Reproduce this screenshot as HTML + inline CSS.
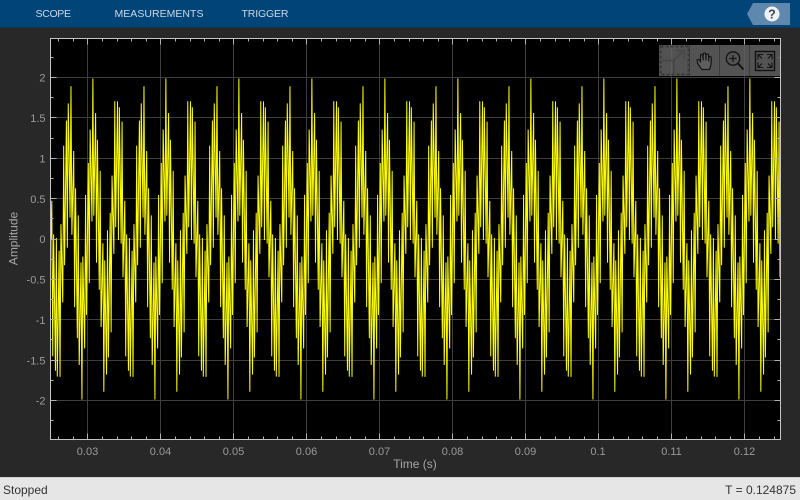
<!DOCTYPE html>
<html><head><meta charset="utf-8"><style>
html,body{margin:0;padding:0;width:800px;height:500px;overflow:hidden;background:#282828}
svg{position:absolute;left:0;top:0;display:block}
text{font-family:"Liberation Sans",sans-serif}
</style></head><body>
<svg width="800" height="500" viewBox="0 0 800 500" xmlns="http://www.w3.org/2000/svg">
<rect width="800" height="500" fill="#282828"/>
<rect width="800" height="27.5" fill="#004478"/>
<g font-size="10.5" fill="#c8d8e6" style="font-family:'DejaVu Sans',sans-serif">
<text x="35.5" y="17" textLength="35.5" lengthAdjust="spacing">SCOPE</text>
<text x="114.5" y="17" textLength="89" lengthAdjust="spacing">MEASUREMENTS</text>
<text x="241.5" y="17" textLength="47" lengthAdjust="spacing">TRIGGER</text>
</g>
<polygon points="747,14 753,3 790,3 790,25 753,25" fill="#5f88ae"/>
<circle cx="772" cy="14" r="7.5" fill="#f2f2f2"/>
<text x="772" y="18.5" text-anchor="middle" font-size="12.5" font-weight="bold" fill="#33475b">?</text>

<rect x="50.5" y="38.5" width="730" height="401" fill="#000"/>
<g id="grid" stroke="#3e3e3e" stroke-width="1" fill="none"></g>
<polyline id="sig" fill="none" stroke="#ffff00" stroke-width="1" points=""/>
<g id="ticks" stroke="#b0b0b0" stroke-width="1" fill="none"></g>
<rect x="50.5" y="38.5" width="730" height="401" fill="none" stroke="#c4c4c4" stroke-width="1"/>
<g id="ylab" font-size="11" fill="#9a9a9a" text-anchor="end">
<text x="45.5" y="81.5">2</text><text x="45.5" y="122">1.5</text><text x="45.5" y="162.5">1</text><text x="45.5" y="203">0.5</text><text x="45.5" y="243">0</text><text x="45.5" y="283.5">-0.5</text><text x="45.5" y="324">-1</text><text x="45.5" y="364.5">-1.5</text><text x="45.5" y="404.5">-2</text>
</g>
<g id="xlab" font-size="11" fill="#9a9a9a" text-anchor="middle">
<text x="87.5" y="455">0.03</text><text x="160.5" y="455">0.04</text><text x="233.5" y="455">0.05</text><text x="306.5" y="455">0.06</text><text x="379.5" y="455">0.07</text><text x="452.5" y="455">0.08</text><text x="525.5" y="455">0.09</text><text x="598" y="455">0.1</text><text x="671.5" y="455">0.11</text><text x="744.5" y="455">0.12</text>
</g>
<text x="415" y="468" text-anchor="middle" font-size="12" fill="#a6a6a6">Time (s)</text>
<text transform="translate(17.5 238.5) rotate(-90)" text-anchor="middle" font-size="12" fill="#a6a6a6">Amplitude</text>

<rect x="659" y="45" width="121" height="31" fill="#626262" fill-opacity="0.85"/>
<path d="M689.5 45V76M719.5 45V76M749.5 45V76" stroke="#3c3c3c" stroke-width="1"/>
<rect x="660.5" y="46.5" width="28" height="28" fill="none" stroke="#383838" stroke-width="2" stroke-dasharray="3 2"/>
<path d="M661.5 60.5H674V74M672 62L684 50.5M676 50.5H684.5V59" fill="none" stroke="#484848" stroke-width="2"/>
<path d="M702 69.5C699 66 697 63 697 60.5C697 59 699 59 700 61L700.5 62V55.5C700.5 54 702.5 54 702.8 55.5L703.2 60V54C703.2 52.8 705.5 52.8 705.7 54L706 60V55C706.3 53.6 708.3 53.6 708.5 55L708.8 61V57.5C709 56.2 711 56.2 711.2 57.5C711.5 62 711 66 709.5 69.5Z" fill="#5f5f5f" stroke="#141414" stroke-width="1.2" stroke-linejoin="round"/>
<circle cx="733" cy="58.5" r="6.7" fill="none" stroke="#141414" stroke-width="1.3"/>
<path d="M729.5 58.5H736.5M733 55V62" stroke="#141414" stroke-width="1.2" fill="none"/>
<path d="M737.8 63.2L743.5 69.5" stroke="#141414" stroke-width="2" fill="none"/>
<rect x="755.5" y="51.5" width="19" height="19" fill="none" stroke="#111" stroke-width="1.4"/>
<path d="M763 54.5H758V59.5M758 54.5L762 58.5M767 54.5H772V59.5M772 54.5L768 58.5M758 62.5V67.5H763M758 67.5L762 63.5M772 62.5V67.5H767M772 67.5L768 63.5" fill="none" stroke="#111" stroke-width="1.1"/>

<rect x="0" y="477" width="800" height="23" fill="#e6e6e6"/>
<rect x="0" y="477" width="800" height="1" fill="#d2d2d2"/>
<text x="3" y="494" font-size="12" fill="#333">Stopped</text>
<text x="796" y="494" font-size="12" fill="#333" text-anchor="end">T = 0.124875</text>
</svg>
<script>
(function(){
var X=function(t){return 87.4+(t-0.03)*7300},Y=function(v){return 239-v*80.75};
var L=50.5,R=780.5,T=38.5,B=439.5,g='',k='',i;
for(i=3;i<=12;i++){var x=Math.round(X(i/100))+0.5;g+='M'+x+' '+T+'V'+B;k+='M'+x+' '+T+'v6M'+x+' '+B+'v-6';}
for(i=-4;i<=4;i++){var y=Math.round(Y(i/2)-0.5)+0.5;g+='M'+L+' '+y+'H'+R;k+='M'+L+' '+y+'h6M'+R+' '+y+'h-6';}
for(i=13;i<=62;i++){if(i%5==0)continue;var x2=Math.round(X(i*0.002))+0.5;if(x2<L||x2>R)continue;k+='M'+x2+' '+T+'v3M'+x2+' '+B+'v-3';}
for(i=-9;i<=9;i++){if(i%2==0)continue;var y2=Math.round(Y(i/4)-0.5)+0.5;k+='M'+L+' '+y2+'h3M'+R+' '+y2+'h-3';}
var gp=document.createElementNS('http://www.w3.org/2000/svg','path');gp.setAttribute('d',g);document.getElementById('grid').appendChild(gp);
var kp=document.createElementNS('http://www.w3.org/2000/svg','path');kp.setAttribute('d',k);document.getElementById('ticks').appendChild(kp);
var p=[];
for(i=200;i<=999;i++){var t=i/8000,v=Math.sin(2*Math.PI*300*t)+Math.sin(2*Math.PI*3000*t);p.push(X(t).toFixed(2)+','+Y(v).toFixed(2));}
document.getElementById('sig').setAttribute('points',p.join(' '));
})();
</script>
</body></html>
